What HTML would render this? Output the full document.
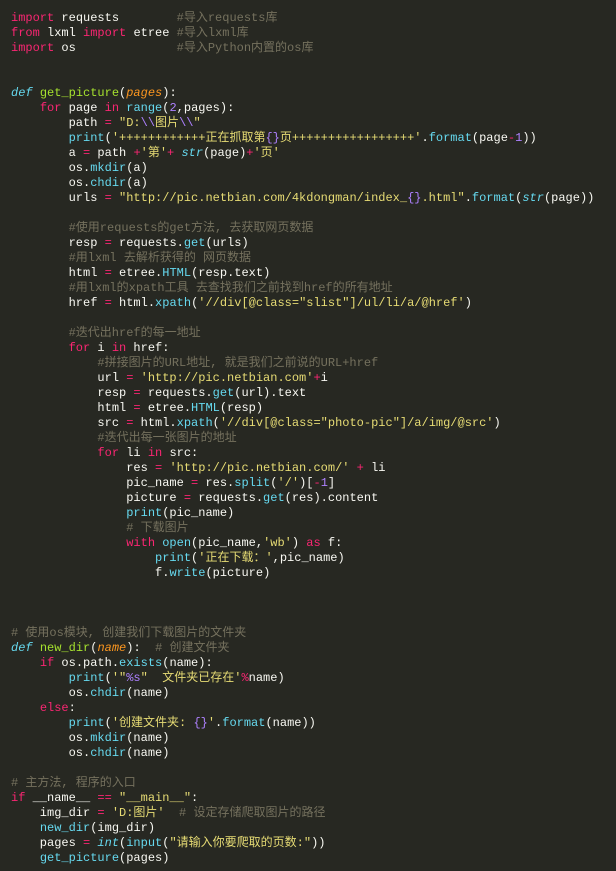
<!DOCTYPE html>
<html><head><meta charset="utf-8"><style>
html,body{margin:0;padding:0;background:#272822;width:616px;height:871px;overflow:hidden}
pre{margin:0;padding:11px 0 0 11px;font-family:"Liberation Mono","Noto Sans CJK SC",monospace;font-size:12px;line-height:15px;color:#f8f8f2;white-space:pre}
.k{color:#f92672}.s{color:#e6db74}.c{color:#75715e}.f{color:#a6e22e}.b{color:#66d9ef}.i{color:#66d9ef;font-style:italic}.p{color:#fd971f;font-style:italic}.n{color:#ae81ff}
</style></head><body><pre><span class="k">import</span> requests        <span class="c">#导入requests库</span>
<span class="k">from</span> lxml <span class="k">import</span> etree <span class="c">#导入lxml库</span>
<span class="k">import</span> os              <span class="c">#导入Python内置的os库</span>


<span class="i">def</span> <span class="f">get_picture</span>(<span class="p">pages</span>):
    <span class="k">for</span> page <span class="k">in</span> <span class="b">range</span>(<span class="n">2</span>,pages):
        path <span class="k">=</span> <span class="s">"D:<span class="n">\\</span>图片<span class="n">\\</span>"</span>
        <span class="b">print</span>(<span class="s">'++++++++++++正在抓取第<span class="n">{}</span>页+++++++++++++++++'</span>.<span class="b">format</span>(page<span class="k">-</span><span class="n">1</span>))
        a <span class="k">=</span> path <span class="k">+</span><span class="s">'第'</span><span class="k">+</span> <span class="i">str</span>(page)<span class="k">+</span><span class="s">'页'</span>
        os.<span class="b">mkdir</span>(a)
        os.<span class="b">chdir</span>(a)
        urls <span class="k">=</span> <span class="s">"http://pic.netbian.com/4kdongman/index_<span class="n">{}</span>.html"</span>.<span class="b">format</span>(<span class="i">str</span>(page))

        <span class="c">#使用requests的get方法, 去获取网页数据</span>
        resp <span class="k">=</span> requests.<span class="b">get</span>(urls)
        <span class="c">#用lxml 去解析获得的 网页数据</span>
        html <span class="k">=</span> etree.<span class="b">HTML</span>(resp.text)
        <span class="c">#用lxml的xpath工具 去查找我们之前找到href的所有地址</span>
        href <span class="k">=</span> html.<span class="b">xpath</span>(<span class="s">'//div[@class="slist"]/ul/li/a/@href'</span>)

        <span class="c">#迭代出href的每一地址</span>
        <span class="k">for</span> i <span class="k">in</span> href:
            <span class="c">#拼接图片的URL地址, 就是我们之前说的URL+href</span>
            url <span class="k">=</span> <span class="s">'http://pic.netbian.com'</span><span class="k">+</span>i
            resp <span class="k">=</span> requests.<span class="b">get</span>(url).text
            html <span class="k">=</span> etree.<span class="b">HTML</span>(resp)
            src <span class="k">=</span> html.<span class="b">xpath</span>(<span class="s">'//div[@class="photo-pic"]/a/img/@src'</span>)
            <span class="c">#迭代出每一张图片的地址</span>
            <span class="k">for</span> li <span class="k">in</span> src:
                res <span class="k">=</span> <span class="s">'http://pic.netbian.com/'</span> <span class="k">+</span> li
                pic_name <span class="k">=</span> res.<span class="b">split</span>(<span class="s">'/'</span>)[<span class="k">-</span><span class="n">1</span>]
                picture <span class="k">=</span> requests.<span class="b">get</span>(res).content
                <span class="b">print</span>(pic_name)
                <span class="c"># 下载图片</span>
                <span class="k">with</span> <span class="b">open</span>(pic_name,<span class="s">'wb'</span>) <span class="k">as</span> f:
                    <span class="b">print</span>(<span class="s">'正在下载：'</span>,pic_name)
                    f.<span class="b">write</span>(picture)



<span class="c"># 使用os模块, 创建我们下载图片的文件夹</span>
<span class="i">def</span> <span class="f">new_dir</span>(<span class="p">name</span>):  <span class="c"># 创建文件夹</span>
    <span class="k">if</span> os.path.<span class="b">exists</span>(name):
        <span class="b">print</span>(<span class="s">'"<span class="n">%s</span>"  文件夹已存在'</span><span class="k">%</span>name)
        os.<span class="b">chdir</span>(name)
    <span class="k">else</span>:
        <span class="b">print</span>(<span class="s">'创建文件夹: <span class="n">{}</span>'</span>.<span class="b">format</span>(name))
        os.<span class="b">mkdir</span>(name)
        os.<span class="b">chdir</span>(name)

<span class="c"># 主方法, 程序的入口</span>
<span class="k">if</span> __name__ <span class="k">==</span> <span class="s">"__main__"</span>:
    img_dir <span class="k">=</span> <span class="s">'D:图片'</span>  <span class="c"># 设定存储爬取图片的路径</span>
    <span class="b">new_dir</span>(img_dir)
    pages <span class="k">=</span> <span class="i">int</span>(<span class="b">input</span>(<span class="s">"请输入你要爬取的页数:"</span>))
    <span class="b">get_picture</span>(pages)</pre></body></html>
